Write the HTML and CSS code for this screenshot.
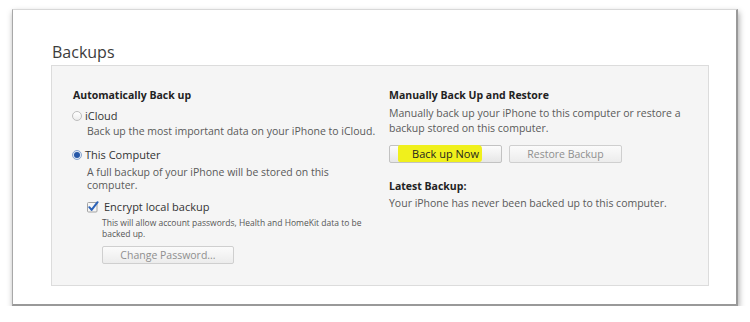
FILE: index.html
```html
<!DOCTYPE html>
<html>
<head>
<meta charset="utf-8">
<link rel="stylesheet" href="styles.css">
</head>
<body>
<div class="window">
  <h1 class="title">Backups</h1>
  <div class="panel">
    <div class="col left">
      <div class="heading">Automatically Back up</div>
      <div class="option">
        <span class="radio"></span><span class="label">iCloud</span>
      </div>
      <div class="desc indent first">Back up the most important data on your iPhone to iCloud.</div>
      <div class="option second">
        <span class="radio checked"></span><span class="label">This Computer</span>
      </div>
      <div class="desc indent wrap">A full backup of your iPhone will be stored on this computer.</div>
      <div class="check-row">
        <svg class="checkbox" width="12" height="12" viewBox="0 0 12 12">
          <rect x="0.5" y="1.5" width="9.5" height="9.5" rx="1" fill="#f6f6f6" stroke="#a3a3a3"/>
          <path d="M2.3 6.2 L4.6 8.9 L10.6 1.2" fill="none" stroke="#2b62b8" stroke-width="2" stroke-linecap="round" stroke-linejoin="round"/>
        </svg>
        <span class="label">Encrypt local backup</span>
      </div>
      <div class="small">This will allow account passwords, Health and HomeKit data to be backed up.</div>
      <button class="btn change">Change Password...</button>
    </div>
    <div class="col right">
      <div class="heading">Manually Back Up and Restore</div>
      <div class="desc">Manually back up your iPhone to this computer or restore a backup stored on this computer.</div>
      <div class="buttons">
        <button class="btn primary"><span class="hl">Back up Now</span></button>
        <button class="btn">Restore Backup</button>
      </div>
      <div class="heading latest">Latest Backup:</div>
      <div class="desc last">Your iPhone has never been backed up to this computer.</div>
    </div>
  </div>
</div>
</body>
</html>
```

FILE: styles.css
```css
html, body {
  margin: 0;
  padding: 0;
  background: #ffffff;
}
body {
  font-family: "Open Sans", "Noto Sans", sans-serif;
  color: #555;
}
.window {
  margin: 9px 0 0 12px;
  width: 726px;
  height: 297px;
  box-sizing: border-box;
  border-top: 1px solid #d8d8d8;
  border-left: 1px solid #a8a8a8;
  border-right: 2px solid #999;
  border-bottom: 2px solid #999;
  box-shadow: 1px 3px 6px rgba(0,0,0,0.35);
  background: #fff;
  padding: 0 27px 0 38px;
  display: flex;
  flex-direction: column;
}
.title {
  margin: 29px 0 0 1px;
  font-weight: normal;
  font-size: 16px;
  line-height: 26px;
  height: 26px;
  color: #3c3c3c;
}
.panel {
  margin-top: 0;
  height: 221px;
  box-sizing: border-box;
  border: 1px solid #dcdcdc;
  background: #f5f5f5;
  display: flex;
  padding: 22px 0 0 21px;
}
.col.left {
  width: 316px;
}
.col.right {
  width: 300px;
}
.heading {
  font-weight: bold;
  font-size: 10.5px;
  line-height: 14px;
  color: #222;
}
.option {
  display: flex;
  align-items: center;
  margin-top: 7px;
  height: 14px;
}
.option.second {
  margin-top: 10px;
}
.radio {
  width: 8px;
  height: 8px;
  border-radius: 50%;
  border: 1px solid #bdbdbd;
  background: linear-gradient(#ffffff, #ececec);
  margin: 0 3px 0 -1px;
  box-sizing: content-box;
  position: relative;
}
.radio.checked {
  border-color: #8aa6d0;
  background: #dfe8f5;
}
.radio.checked::after {
  content: "";
  position: absolute;
  left: 1px;
  top: 1px;
  width: 6px;
  height: 6px;
  border-radius: 50%;
  background: #2557a8;
}
.label {
  font-size: 11px;
  line-height: 14px;
  color: #333;
}
.desc {
  font-size: 10.5px;
  line-height: 13px;
  color: #5a5a5a;
  margin-top: 2px;
}
.indent {
  padding-left: 14px;
}
.desc.wrap {
  width: 290px;
  margin-top: 4px;
}
.check-row {
  display: flex;
  align-items: center;
  margin: 8px 0 0 14px;
  height: 14px;
}
.checkbox {
  margin-right: 5px;
  flex: none;
}
.small {
  font-size: 8.5px;
  line-height: 11px;
  color: #555;
  margin: 3px 0 0 29px;
  width: 260px;
}
.btn {
  font-family: "Open Sans", "Noto Sans", sans-serif;
  font-size: 10.5px;
  color: #8f8f8f;
  background: linear-gradient(#fbfbfb, #ececec);
  border: 1px solid #cfcfcf;
  border-radius: 2px;
  height: 18px;
  padding: 0;
  line-height: 16px;
}
.btn.change {
  display: block;
  margin: 7px 0 0 29px;
  width: 132px;
}
.right .desc {
  line-height: 15px;
  margin-top: 4px;
}
.buttons {
  display: flex;
  gap: 7px;
  margin-top: 9px;
}
.buttons .btn {
  width: 113px;
  height: 18px;
}
.btn.primary {
  color: #1e1e1e;
  font-size: 11px;
  background: linear-gradient(#fcfcfc, #e6e6e6);
  border-color: #c2c2c2;
}
.hl {
  position: relative;
  z-index: 0;
}
.hl::before {
  content: "";
  position: absolute;
  left: -14px;
  right: -3px;
  top: -1px;
  bottom: -1px;
  background: #f0f01c;
  border-radius: 2px 4px 3px 2px;
  z-index: -1;
}
.heading.latest {
  margin-top: 16px;
}
.right .desc.last {
  margin-top: 3px;
}
```
